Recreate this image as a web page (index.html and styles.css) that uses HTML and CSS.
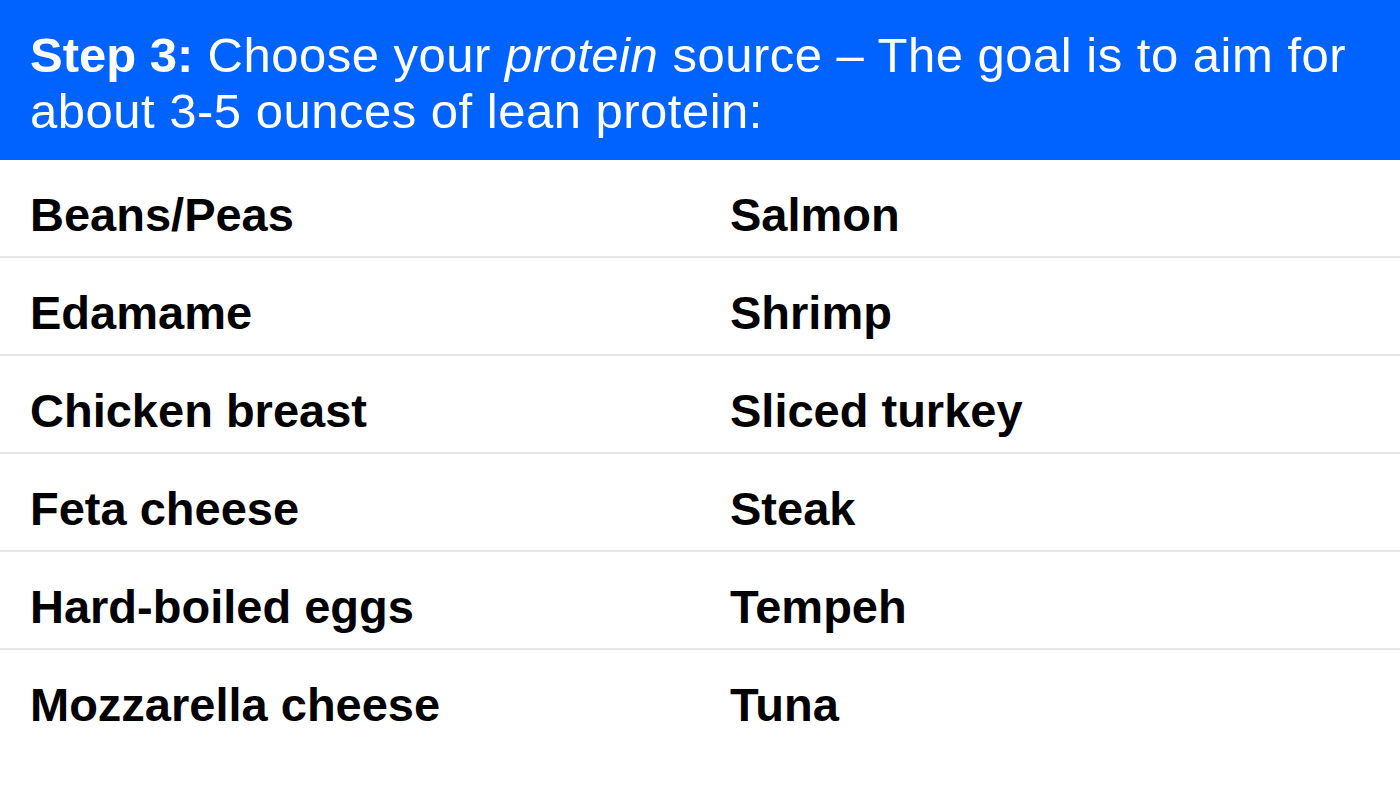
FILE: index.html
```html
<!DOCTYPE html>
<html lang="en">
<head>
<meta charset="utf-8">
<title>Step 3: Choose your protein source</title>
<link rel="stylesheet" href="styles.css">
</head>
<body>
<main class="card">
  <header class="banner">
    <p class="banner-text"><strong>Step 3:</strong> Choose your <em>protein</em> source – The goal is to aim for about 3-5 ounces of lean protein:</p>
  </header>
  <ul class="grid">
    <li class="cell">Beans/Peas</li>
    <li class="cell">Salmon</li>
    <li class="cell">Edamame</li>
    <li class="cell">Shrimp</li>
    <li class="cell">Chicken breast</li>
    <li class="cell">Sliced turkey</li>
    <li class="cell">Feta cheese</li>
    <li class="cell">Steak</li>
    <li class="cell">Hard-boiled eggs</li>
    <li class="cell">Tempeh</li>
    <li class="cell last">Mozzarella cheese</li>
    <li class="cell last">Tuna</li>
  </ul>
</main>
</body>
</html>
```
FILE: styles.css
```css
* { box-sizing: border-box; }
html, body {
  margin: 0;
  padding: 0;
  background: #ffffff;
}
body {
  width: 1400px;
  height: 800px;
  overflow: hidden;
  font-family: "Liberation Sans", Arial, sans-serif;
  color: #000000;
}
.banner {
  background: #0062ff;
  height: 160px;
  padding: 27px 30px 0 30px;
}
.banner-text {
  margin: 0;
  color: #ffffff;
  font-size: 49px;
  line-height: 56px;
  letter-spacing: 0.5px;
}
.banner-text strong { font-weight: 700; letter-spacing: 0; }
.banner-text em { font-style: italic; }
.grid {
  list-style: none;
  margin: 0;
  padding: 0;
  display: grid;
  grid-template-columns: 700px 700px;
}
.cell {
  height: 98px;
  padding: 30px 30px 0 30px;
  font-size: 47px;
  font-weight: 700;
  line-height: 50px;
  border-bottom: 2px solid #e6e6e6;
}
.cell.last { border-bottom: none; }
```
